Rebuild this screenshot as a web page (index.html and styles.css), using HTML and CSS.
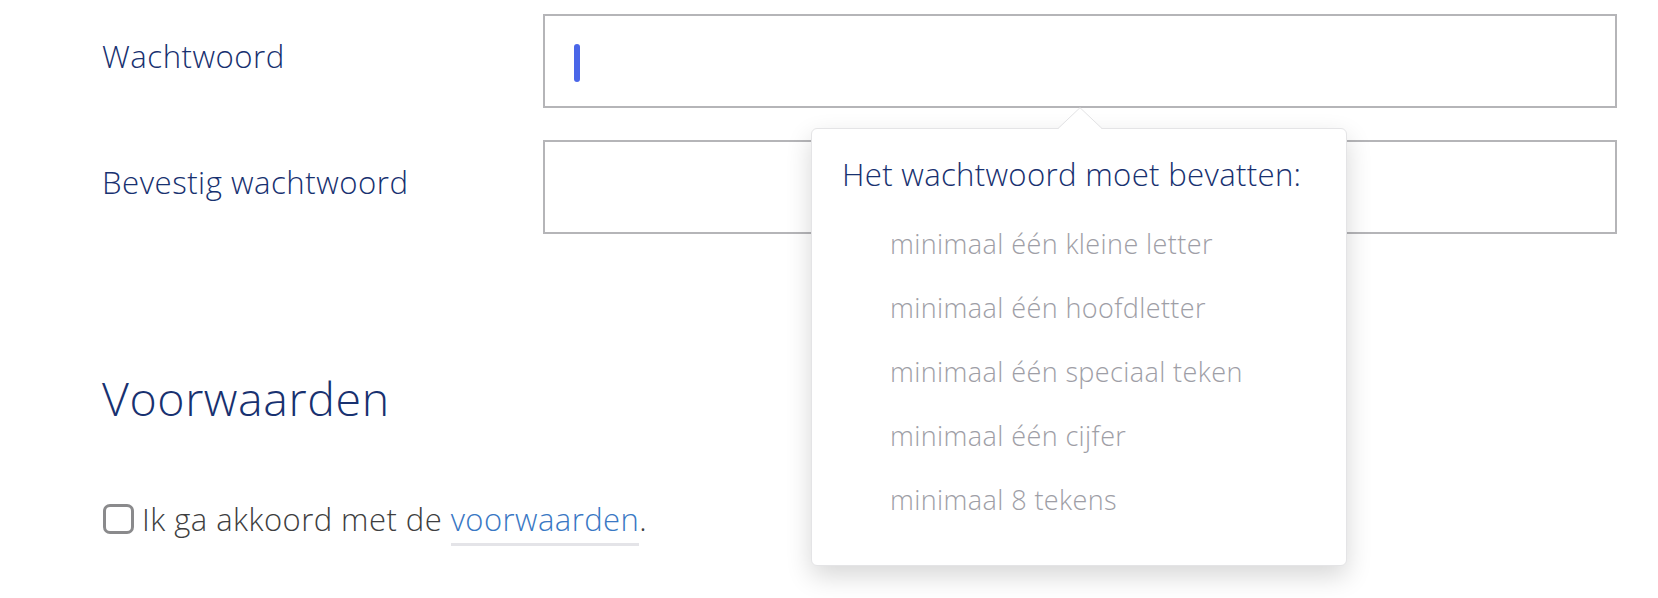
FILE: index.html
```html
<!DOCTYPE html>
<html lang="nl">
<head>
<meta charset="utf-8">
<title>Wachtwoord</title>
<link rel="stylesheet" href="styles.css">
</head>
<body>
<main class="form">
  <div class="row">
    <label class="label" for="pw">Wachtwoord</label>
    <div class="field-wrap">
      <div class="input is-focused" id="pw"><span class="caret"></span></div>
      <div class="popover">
        <svg class="popover-arrow" width="44" height="22" viewBox="0 0 44 22">
          <polygon points="0,22 22,1 44,22" fill="#ffffff"/>
          <polyline points="0,21.5 22,0.7 44,21.5" fill="none" stroke="#e2e2e4" stroke-width="1"/>
        </svg>
        <p class="popover-title">Het wachtwoord moet bevatten:</p>
        <ul class="rules">
          <li>minimaal één kleine letter</li>
          <li>minimaal één hoofdletter</li>
          <li>minimaal één speciaal teken</li>
          <li>minimaal één cijfer</li>
          <li>minimaal 8 tekens</li>
        </ul>
      </div>
    </div>
  </div>
  <div class="row">
    <label class="label" for="pw2">Bevestig wachtwoord</label>
    <div class="field-wrap">
      <div class="input" id="pw2"></div>
    </div>
  </div>
  <h2 class="section-title">Voorwaarden</h2>
  <div class="check">
    <span class="checkbox"></span>
    <span class="check-text">Ik ga akkoord met de <a class="link" href="#">voorwaarden</a>.</span>
  </div>
</main>
</body>
</html>
```

FILE: styles.css
```css
* { box-sizing: border-box; }
html, body { margin: 0; padding: 0; background: #ffffff; }
body {
  font-family: "Open Sans", "Noto Sans", sans-serif;
  font-weight: 350;
  width: 1658px;
  height: 598px;
  overflow: hidden;
}
.form {
  padding: 14px 0 0 102px;
}
.row {
  display: flex;
  align-items: flex-start;
  margin-bottom: 32px;
}
.label {
  width: 441px;
  padding-top: 22px;
  font-size: 31.2px;
  line-height: 40px;
  letter-spacing: 0.5px;
  color: #183170;
}
.field-wrap {
  position: relative;
}
.input {
  width: 1074px;
  height: 94px;
  border: 2px solid #b5b5b8;
  background: #fff;
  display: flex;
  align-items: center;
  padding-left: 29px;
}
.caret {
  display: block;
  width: 6px;
  height: 38px;
  margin-top: 4px;
  border-radius: 3px;
  background: #4a66e8;
}
.popover {
  position: absolute;
  left: 268px;
  top: 114px;
  width: 536px;
  height: 438px;
  background: #fff;
  border: 1px solid #e4e4e6;
  border-radius: 6px;
  box-shadow: 0 10px 26px rgba(0, 0, 0, 0.16);
  padding: 25px 30px 0 30px;
  z-index: 2;
}
.popover-arrow {
  position: absolute;
  left: 246px;
  top: -22px;
  display: block;
}
.popover-title {
  margin: 0;
  font-size: 31.2px;
  line-height: 40px;
  letter-spacing: 0.3px;
  color: #183170;
}
.rules {
  list-style: none;
  margin: 18px 0 0 0;
  padding: 0 0 0 48px;
}
.rules li {
  font-size: 27px;
  line-height: 64px;
  letter-spacing: 0.4px;
  color: #9e9ea6;
}
.section-title {
  margin: 142px 0 0 0;
  font-weight: 350;
  font-size: 46.5px;
  line-height: 45px;
  letter-spacing: 0.6px;
  color: #183170;
}
.check {
  display: flex;
  align-items: center;
  margin-top: 80px;
  margin-left: 1px;
}
.checkbox {
  width: 31px;
  height: 30px;
  border: 3px solid #8a8a8c;
  border-radius: 7px;
  margin-right: 8px;
  background: #fff;
}
.check-text {
  font-size: 31px;
  line-height: 36px;
  letter-spacing: 0.45px;
  color: #3e3e40;
}
.link {
  color: #3a78c4;
  text-decoration: none;
  border-bottom: 3px solid #e4e4e8;
  padding-bottom: 3px;
}
```
